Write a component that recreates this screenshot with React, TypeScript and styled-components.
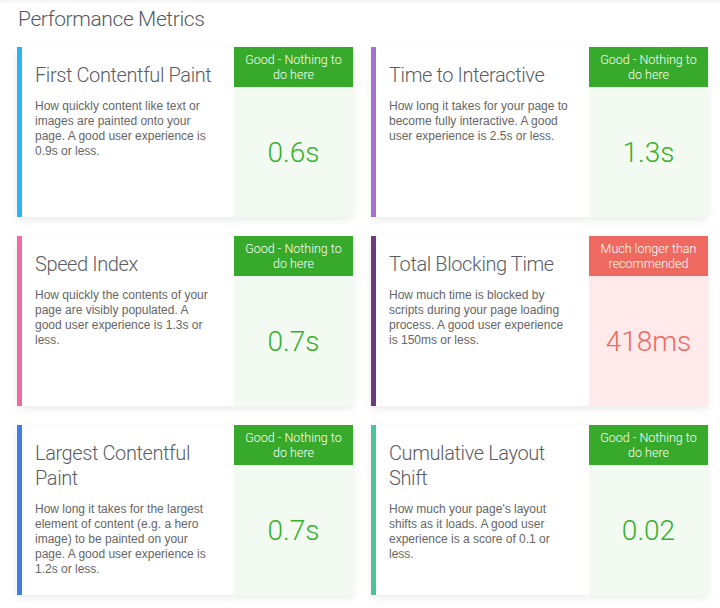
import styled, { createGlobalStyle } from 'styled-components';

const GlobalStyle = createGlobalStyle`
    html, body {
        margin: 0;
        padding: 0;
        background: #ffffff;
    }
    body {
        width: 720px;
        height: 608px;
        overflow: hidden;
    }
`

type Metric = {
    title: string;
    desc: string;
    value: string;
    accent: string;
    bad?: boolean;
    status: string;
};

const GOOD = 'Good - Nothing to do here';

const metrics: Metric[] = [
    {
        title: 'First Contentful Paint',
        desc: 'How quickly content like text or images are painted onto your page. A good user experience is 0.9s or less.',
        value: '0.6s',
        accent: '#2db4f2',
        status: GOOD,
    },
    {
        title: 'Time to Interactive',
        desc: 'How long it takes for your page to become fully interactive. A good user experience is 2.5s or less.',
        value: '1.3s',
        accent: '#a86fd3',
        status: GOOD,
    },
    {
        title: 'Speed Index',
        desc: 'How quickly the contents of your page are visibly populated. A good user experience is 1.3s or less.',
        value: '0.7s',
        accent: '#f06aa3',
        status: GOOD,
    },
    {
        title: 'Total Blocking Time',
        desc: 'How much time is blocked by scripts during your page loading process. A good user experience is 150ms or less.',
        value: '418ms',
        accent: '#6b3d7d',
        bad: true,
        status: 'Much longer than recommended',
    },
    {
        title: 'Largest Contentful Paint',
        desc: 'How long it takes for the largest element of content (e.g. a hero image) to be painted on your page. A good user experience is 1.2s or less.',
        value: '0.7s',
        accent: '#3f7ee3',
        status: GOOD,
    },
    {
        title: 'Cumulative Layout Shift',
        desc: "How much your page's layout shifts as it loads. A good user experience is a score of 0.1 or less.",
        value: '0.02',
        accent: '#4cc39b',
        status: GOOD,
    },
];

export default function App() {
    return (
        <>
        <GlobalStyle/>
        <Section>
            <SectionTitle>Performance Metrics</SectionTitle>
            <MetricGrid>
                {metrics.map((m) => (
                    <MetricCard key={m.title} $accent={m.accent}>
                        <CardBody>
                            <CardTitle>{m.title}</CardTitle>
                            <CardDesc>{m.desc}</CardDesc>
                        </CardBody>
                        <ScoreColumn $bad={m.bad}>
                            <StatusBadge $bad={m.bad}>{m.status}</StatusBadge>
                            <ScoreValue $bad={m.bad}>{m.value}</ScoreValue>
                        </ScoreColumn>
                    </MetricCard>
                ))}
            </MetricGrid>
        </Section>
        </>
    )
}

const Section = styled.div`
    padding: 7px 12px 0 17px;
    height: 600px;
    box-shadow: inset 0 5px 4px -4px rgba(0,0,0,0.08);
`
const SectionTitle = styled.div`
    font-family: Roboto, "Noto Sans", sans-serif;
    font-weight: 300;
    font-size: 21px;
    letter-spacing: -0.4px;
    color: #555a60;
    line-height: 24px;
    margin-left: 1px;
    margin-bottom: 16px;
`
const MetricGrid = styled.div`
    display: grid;
    grid-template-columns: 336px 337px;
    grid-auto-rows: 170px;
    column-gap: 18px;
    row-gap: 19px;
`
const MetricCard = styled.div<{ $accent: string }>`
    display: flex;
    background: #fff;
    border-left: 5px solid ${(p) => p.$accent};
    box-shadow: 0 3px 8px rgba(0,0,0,0.08);
`
const CardBody = styled.div`
    flex: 1;
    padding: 16px 19px 0 13px;
`
const CardTitle = styled.div`
    font-family: Roboto, "Noto Sans", sans-serif;
    font-weight: 300;
    font-size: 20px;
    letter-spacing: -0.4px;
    line-height: 25px;
    color: #5a5d63;
    margin-bottom: 11px;
`
const CardDesc = styled.div`
    font-family: "Liberation Sans", Arial, sans-serif;
    font-size: 12px;
    line-height: 15px;
    color: #666;
`
const ScoreColumn = styled.div<{ $bad?: boolean }>`
    width: 119px;
    display: flex;
    flex-direction: column;
    background: ${(p) => (p.$bad ? '#feeaea' : '#f3faf1')};
`
const StatusBadge = styled.div<{ $bad?: boolean }>`
    height: 40px;
    box-sizing: border-box;
    padding: 5px 6px 0;
    background: ${(p) => (p.$bad ? '#ee6a60' : '#38aa2b')};
    color: #fff;
    font-family: Roboto, "Noto Sans", sans-serif;
    font-weight: 300;
    font-size: 12.5px;
    line-height: 15px;
    text-align: center;
`
const ScoreValue = styled.div<{ $bad?: boolean }>`
    flex: 1;
    display: flex;
    align-items: center;
    justify-content: center;
    font-family: Roboto, "Noto Sans", sans-serif;
    font-weight: 300;
    font-size: 28px;
    color: ${(p) => (p.$bad ? '#ee6a60' : '#37b02c')};
`
